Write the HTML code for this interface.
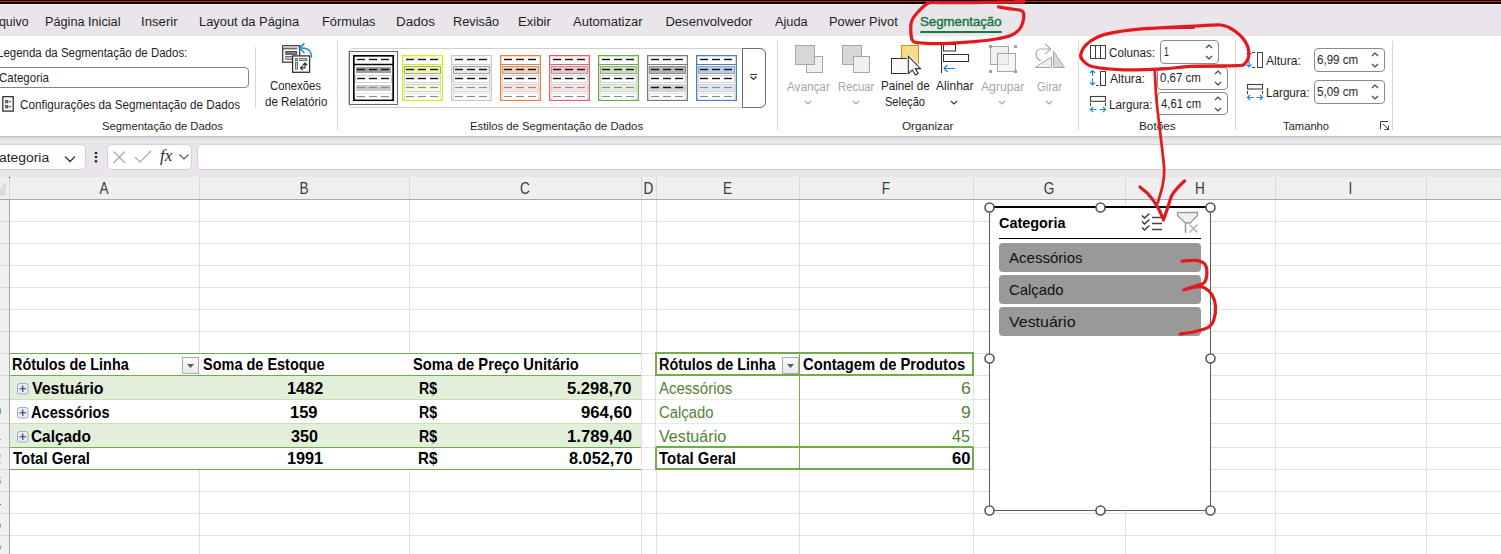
<!DOCTYPE html>
<html><head><meta charset="utf-8"><style>
html,body{margin:0;padding:0;}
body{width:1501px;height:554px;overflow:hidden;position:relative;background:#fff;font-family:"Liberation Sans",sans-serif;}
body>div{position:absolute;}
.t{white-space:pre;transform-origin:0 0;}
</style></head><body>
<div style="left:0px;top:0px;width:1501px;height:4px;background:#000"></div>
<div style="left:0px;top:1px;width:1501px;height:1px;background:#d81c1c"></div>
<div style="left:0px;top:4px;width:1501px;height:32px;background:#eae4eb"></div>
<div style="left:0px;top:4px;width:1501px;height:1px;background:#f5f1f7"></div>
<div class="t" style="left:-0.52px;top:15.00px;font-size:13.08px;line-height:13.08px;color:#1f1f1f;transform:scaleX(0.9442);">quivo</div>
<div class="t" style="left:44.65px;top:15.00px;font-size:13.08px;line-height:13.08px;color:#1f1f1f;transform:scaleX(0.9701);">Página Inicial</div>
<div class="t" style="left:140.78px;top:15.00px;font-size:13.08px;line-height:13.08px;color:#1f1f1f;transform:scaleX(1.0078);">Inserir</div>
<div class="t" style="left:199.34px;top:15.00px;font-size:13.08px;line-height:13.08px;color:#1f1f1f;transform:scaleX(0.9835);">Layout da Página</div>
<div class="t" style="left:322.14px;top:15.00px;font-size:13.08px;line-height:13.08px;color:#1f1f1f;transform:scaleX(0.9815);">Fórmulas</div>
<div class="t" style="left:396.19px;top:15.00px;font-size:13.08px;line-height:13.08px;color:#1f1f1f;transform:scaleX(1.0285);">Dados</div>
<div class="t" style="left:452.95px;top:15.00px;font-size:13.08px;line-height:13.08px;color:#1f1f1f;transform:scaleX(0.9769);">Revisão</div>
<div class="t" style="left:517.92px;top:15.00px;font-size:13.08px;line-height:13.08px;color:#1f1f1f;transform:scaleX(1.0023);">Exibir</div>
<div class="t" style="left:573.17px;top:15.00px;font-size:13.08px;line-height:13.08px;color:#1f1f1f;transform:scaleX(0.9963);">Automatizar</div>
<div class="t" style="left:665.42px;top:15.00px;font-size:13.08px;line-height:13.08px;color:#1f1f1f;">Desenvolvedor</div>
<div class="t" style="left:774.87px;top:15.00px;font-size:13.08px;line-height:13.08px;color:#1f1f1f;transform:scaleX(0.9744);">Ajuda</div>
<div class="t" style="left:829.14px;top:15.00px;font-size:13.08px;line-height:13.08px;color:#1f1f1f;transform:scaleX(0.9853);">Power Pivot</div>
<div class="t" style="left:919.90px;top:16.00px;font-size:12.79px;line-height:12.79px;color:#137a40;transform:scaleX(1.0343);-webkit-text-stroke:0.4px #137a40;">Segmentação</div>
<div style="left:920px;top:31px;width:82px;height:2px;background:#107c41;border-radius:1px"></div>
<div style="left:0px;top:36px;width:1501px;height:100px;background:#fff"></div>
<div style="left:0px;top:136px;width:1501px;height:1px;background:#cbc6cd"></div>
<div class="t" style="left:-3.15px;top:47.00px;font-size:12.65px;line-height:12.65px;color:#1f1f1f;transform:scaleX(0.9087);">Legenda da Segmentação de Dados:</div>
<div style="left:-10px;top:67px;width:259px;height:21px;box-sizing:border-box;border:1px solid #858585;border-radius:4px;background:#fff"></div>
<div class="t" style="left:-0.58px;top:72.00px;font-size:12.94px;line-height:12.94px;color:#1f1f1f;transform:scaleX(0.8907);">Categoria</div>
<svg style="position:absolute;left:0px;top:92px" width="24" height="24" viewBox="0 0 24 24"><rect x="2.8" y="4.7" width="10.4" height="14.4" fill="#fff" stroke="#333" stroke-width="1.3"/><rect x="5.7" y="8.6" width="2" height="2" fill="#fff" stroke="#555" stroke-width="1.3"/><rect x="5.7" y="13.6" width="2" height="2" fill="#fff" stroke="#555" stroke-width="1.3"/><line x1="9.2" y1="9.6" x2="11" y2="9.6" stroke="#555" stroke-width="1.2"/><line x1="9.2" y1="14.6" x2="11" y2="14.6" stroke="#555" stroke-width="1.2"/></svg>
<div class="t" style="left:19.72px;top:99.00px;font-size:12.65px;line-height:12.65px;color:#1f1f1f;transform:scaleX(0.9235);">Configurações da Segmentação de Dados</div>
<div style="left:255px;top:47px;width:1px;height:61px;background:#d6d6d6"></div>
<svg style="position:absolute;left:278px;top:40px" width="38" height="36" viewBox="0 0 38 36"><rect x="4.7" y="5.7" width="17" height="16.5" fill="#fff" stroke="#333" stroke-width="1.2"/><rect x="5.3" y="6.2" width="15.5" height="2" fill="#c4c4c4"/><line x1="4.7" y1="8.8" x2="19.5" y2="8.8" stroke="#333" stroke-width="1"/><rect x="7.8" y="11.6" width="11" height="2.7" fill="#7a7a7a" stroke="#333" stroke-width="0.8"/><rect x="7.8" y="16.6" width="7" height="2.7" fill="#c8c8c8" stroke="#555" stroke-width="0.8"/><rect x="14.6" y="15.9" width="17" height="16.4" fill="#fff" stroke="#333" stroke-width="1.3"/><rect x="17.4" y="18.6" width="2" height="2" fill="#c8c8c8" stroke="#555" stroke-width="0.8"/><rect x="21.6" y="18.6" width="7.2" height="2" fill="#c8c8c8" stroke="#555" stroke-width="0.8"/><rect x="17.4" y="22.2" width="2" height="7" fill="#c8c8c8" stroke="#555" stroke-width="0.8"/><path d="M22.6 27.9 H27 V22.9 M24.8 25.3 L27 22.9 L29.2 25.3 M24.8 25.6 L22.4 27.9 L24.8 30.2" fill="none" stroke="#333" stroke-width="1.1"/><path d="M21.6 8.1 C27 7.6 31 9 32.6 12.5 C33.4 14 33.5 16 33.4 17.6" fill="none" stroke="#1e88d8" stroke-width="1.5"/><path d="M26.4 3.4 L21.6 8.1 L26.4 13" fill="none" stroke="#1e88d8" stroke-width="1.5"/></svg>
<div class="t" style="left:270.23px;top:80.00px;font-size:12.65px;line-height:12.65px;color:#1f1f1f;transform:scaleX(0.8951);">Conexões</div>
<div class="t" style="left:264.51px;top:96.00px;font-size:12.65px;line-height:12.65px;color:#1f1f1f;transform:scaleX(0.9148);">de Relatório</div>
<div class="t" style="left:101.79px;top:121.00px;font-size:11.48px;line-height:11.48px;color:#1f1f1f;transform:scaleX(0.9829);">Segmentação de Dados</div>
<div style="left:337px;top:41px;width:1px;height:89px;background:#d6d6d6"></div>
<div style="left:348px;top:48px;width:418px;height:60px;box-sizing:border-box;border:1px solid #cfcfcf;border-radius:5px;background:#fff"></div>
<div style="left:742px;top:48px;width:24px;height:60px;box-sizing:border-box;border:1px solid #6c6c6c;border-radius:0 6px 6px 0;background:#fff"></div>
<svg style="position:absolute;left:748px;top:72px" width="12" height="10" viewBox="0 0 12 10"><path d="M2 2.5 H9" stroke="#333" stroke-width="1.1"/><path d="M2.5 4.5 L5.5 7.5 L8.5 4.5" fill="none" stroke="#333" stroke-width="1.2"/></svg>
<div style="left:349px;top:51px;width:49px;height:54px;box-sizing:border-box;border:1.5px solid #6a6a6a;background:#f7f7f7"></div>
<svg style="position:absolute;left:353px;top:55px" width="41" height="46" viewBox="0 0 41 46"><rect x="0.7" y="0.7" width="39.6" height="44.6" fill="#fff" stroke="#000" stroke-width="1.4"/><line x1="0" y1="9.5" x2="41" y2="9.5" stroke="#000" stroke-width="1.4"/><rect x="2.5" y="11.5" width="36" height="7" fill="#9c9c9c" stroke="#fff" stroke-width="1"/><rect x="2.5" y="20.5" width="36" height="7" fill="#fff" stroke="#d2d2d2" stroke-width="1"/><rect x="2.5" y="29.5" width="36" height="7" fill="#cacaca" stroke="#fff" stroke-width="1"/><rect x="2.5" y="38.5" width="36" height="8" fill="#fff" stroke="#e2e2e2" stroke-width="1"/><line x1="4" y1="4.5" x2="12" y2="4.5" stroke="#111" stroke-width="1.4"/><line x1="16" y1="4.5" x2="24" y2="4.5" stroke="#111" stroke-width="1.4"/><line x1="28" y1="4.5" x2="36" y2="4.5" stroke="#111" stroke-width="1.4"/><line x1="4" y1="14.5" x2="12" y2="14.5" stroke="#111" stroke-width="1.4"/><line x1="16" y1="14.5" x2="24" y2="14.5" stroke="#111" stroke-width="1.4"/><line x1="28" y1="14.5" x2="36" y2="14.5" stroke="#111" stroke-width="1.4"/><line x1="4" y1="23.5" x2="12" y2="23.5" stroke="#111" stroke-width="1.4"/><line x1="16" y1="23.5" x2="24" y2="23.5" stroke="#111" stroke-width="1.4"/><line x1="28" y1="23.5" x2="36" y2="23.5" stroke="#111" stroke-width="1.4"/><line x1="4" y1="32.5" x2="12" y2="32.5" stroke="#8c8c8c" stroke-width="1.2"/><line x1="16" y1="32.5" x2="24" y2="32.5" stroke="#8c8c8c" stroke-width="1.2"/><line x1="28" y1="32.5" x2="36" y2="32.5" stroke="#8c8c8c" stroke-width="1.2"/><line x1="4" y1="41.5" x2="12" y2="41.5" stroke="#8c8c8c" stroke-width="1.2"/><line x1="16" y1="41.5" x2="24" y2="41.5" stroke="#8c8c8c" stroke-width="1.2"/><line x1="28" y1="41.5" x2="36" y2="41.5" stroke="#8c8c8c" stroke-width="1.2"/><rect x="0.7" y="0.7" width="39.6" height="44.6" fill="none" stroke="#000" stroke-width="1.4"/></svg>
<svg style="position:absolute;left:402px;top:55px" width="41" height="46" viewBox="0 0 41 46"><rect x="0.575" y="0.575" width="39.85" height="44.85" fill="#fff" stroke="#ccf500" stroke-width="1.15"/><line x1="0" y1="9.5" x2="41" y2="9.5" stroke="#ccf500" stroke-width="1.15"/><rect x="2.5" y="11.5" width="36" height="7" fill="#f3f7a6" stroke="#a0a0a0" stroke-width="1"/><rect x="2.5" y="20.5" width="36" height="7" fill="#fff" stroke="#d2d2d2" stroke-width="1"/><rect x="2.5" y="29.5" width="36" height="7" fill="#f9fbd9" stroke="#d2d2d2" stroke-width="1"/><rect x="2.5" y="38.5" width="36" height="8" fill="#fff" stroke="#e2e2e2" stroke-width="1"/><line x1="4" y1="4.5" x2="12" y2="4.5" stroke="#111" stroke-width="1.4"/><line x1="16" y1="4.5" x2="24" y2="4.5" stroke="#111" stroke-width="1.4"/><line x1="28" y1="4.5" x2="36" y2="4.5" stroke="#111" stroke-width="1.4"/><line x1="4" y1="14.5" x2="12" y2="14.5" stroke="#111" stroke-width="1.4"/><line x1="16" y1="14.5" x2="24" y2="14.5" stroke="#111" stroke-width="1.4"/><line x1="28" y1="14.5" x2="36" y2="14.5" stroke="#111" stroke-width="1.4"/><line x1="4" y1="23.5" x2="12" y2="23.5" stroke="#111" stroke-width="1.4"/><line x1="16" y1="23.5" x2="24" y2="23.5" stroke="#111" stroke-width="1.4"/><line x1="28" y1="23.5" x2="36" y2="23.5" stroke="#111" stroke-width="1.4"/><line x1="4" y1="32.5" x2="12" y2="32.5" stroke="#8c8c8c" stroke-width="1.2"/><line x1="16" y1="32.5" x2="24" y2="32.5" stroke="#8c8c8c" stroke-width="1.2"/><line x1="28" y1="32.5" x2="36" y2="32.5" stroke="#8c8c8c" stroke-width="1.2"/><line x1="4" y1="41.5" x2="12" y2="41.5" stroke="#8c8c8c" stroke-width="1.2"/><line x1="16" y1="41.5" x2="24" y2="41.5" stroke="#8c8c8c" stroke-width="1.2"/><line x1="28" y1="41.5" x2="36" y2="41.5" stroke="#8c8c8c" stroke-width="1.2"/><rect x="0.575" y="0.575" width="39.85" height="44.85" fill="none" stroke="#ccf500" stroke-width="1.15"/></svg>
<svg style="position:absolute;left:451px;top:55px" width="41" height="46" viewBox="0 0 41 46"><rect x="0.575" y="0.575" width="39.85" height="44.85" fill="#fff" stroke="#c8c8c8" stroke-width="1.15"/><line x1="0" y1="9.5" x2="41" y2="9.5" stroke="#c8c8c8" stroke-width="1.15"/><rect x="2.5" y="11.5" width="36" height="7" fill="#e9e9e9" stroke="#a0a0a0" stroke-width="1"/><rect x="2.5" y="20.5" width="36" height="7" fill="#fff" stroke="#d2d2d2" stroke-width="1"/><rect x="2.5" y="29.5" width="36" height="7" fill="#f2f2f2" stroke="#d2d2d2" stroke-width="1"/><rect x="2.5" y="38.5" width="36" height="8" fill="#fff" stroke="#e2e2e2" stroke-width="1"/><line x1="4" y1="4.5" x2="12" y2="4.5" stroke="#111" stroke-width="1.4"/><line x1="16" y1="4.5" x2="24" y2="4.5" stroke="#111" stroke-width="1.4"/><line x1="28" y1="4.5" x2="36" y2="4.5" stroke="#111" stroke-width="1.4"/><line x1="4" y1="14.5" x2="12" y2="14.5" stroke="#111" stroke-width="1.4"/><line x1="16" y1="14.5" x2="24" y2="14.5" stroke="#111" stroke-width="1.4"/><line x1="28" y1="14.5" x2="36" y2="14.5" stroke="#111" stroke-width="1.4"/><line x1="4" y1="23.5" x2="12" y2="23.5" stroke="#111" stroke-width="1.4"/><line x1="16" y1="23.5" x2="24" y2="23.5" stroke="#111" stroke-width="1.4"/><line x1="28" y1="23.5" x2="36" y2="23.5" stroke="#111" stroke-width="1.4"/><line x1="4" y1="32.5" x2="12" y2="32.5" stroke="#8c8c8c" stroke-width="1.2"/><line x1="16" y1="32.5" x2="24" y2="32.5" stroke="#8c8c8c" stroke-width="1.2"/><line x1="28" y1="32.5" x2="36" y2="32.5" stroke="#8c8c8c" stroke-width="1.2"/><line x1="4" y1="41.5" x2="12" y2="41.5" stroke="#8c8c8c" stroke-width="1.2"/><line x1="16" y1="41.5" x2="24" y2="41.5" stroke="#8c8c8c" stroke-width="1.2"/><line x1="28" y1="41.5" x2="36" y2="41.5" stroke="#8c8c8c" stroke-width="1.2"/><rect x="0.575" y="0.575" width="39.85" height="44.85" fill="none" stroke="#c8c8c8" stroke-width="1.15"/></svg>
<svg style="position:absolute;left:500px;top:55px" width="41" height="46" viewBox="0 0 41 46"><rect x="0.575" y="0.575" width="39.85" height="44.85" fill="#fff" stroke="#f47d3a" stroke-width="1.15"/><line x1="0" y1="9.5" x2="41" y2="9.5" stroke="#f47d3a" stroke-width="1.15"/><rect x="2.5" y="11.5" width="36" height="7" fill="#fbcdb2" stroke="#a0a0a0" stroke-width="1"/><rect x="2.5" y="20.5" width="36" height="7" fill="#fff" stroke="#d2d2d2" stroke-width="1"/><rect x="2.5" y="29.5" width="36" height="7" fill="#fde6d9" stroke="#d2d2d2" stroke-width="1"/><rect x="2.5" y="38.5" width="36" height="8" fill="#fff" stroke="#e2e2e2" stroke-width="1"/><line x1="4" y1="4.5" x2="12" y2="4.5" stroke="#111" stroke-width="1.4"/><line x1="16" y1="4.5" x2="24" y2="4.5" stroke="#111" stroke-width="1.4"/><line x1="28" y1="4.5" x2="36" y2="4.5" stroke="#111" stroke-width="1.4"/><line x1="4" y1="14.5" x2="12" y2="14.5" stroke="#111" stroke-width="1.4"/><line x1="16" y1="14.5" x2="24" y2="14.5" stroke="#111" stroke-width="1.4"/><line x1="28" y1="14.5" x2="36" y2="14.5" stroke="#111" stroke-width="1.4"/><line x1="4" y1="23.5" x2="12" y2="23.5" stroke="#111" stroke-width="1.4"/><line x1="16" y1="23.5" x2="24" y2="23.5" stroke="#111" stroke-width="1.4"/><line x1="28" y1="23.5" x2="36" y2="23.5" stroke="#111" stroke-width="1.4"/><line x1="4" y1="32.5" x2="12" y2="32.5" stroke="#8c8c8c" stroke-width="1.2"/><line x1="16" y1="32.5" x2="24" y2="32.5" stroke="#8c8c8c" stroke-width="1.2"/><line x1="28" y1="32.5" x2="36" y2="32.5" stroke="#8c8c8c" stroke-width="1.2"/><line x1="4" y1="41.5" x2="12" y2="41.5" stroke="#8c8c8c" stroke-width="1.2"/><line x1="16" y1="41.5" x2="24" y2="41.5" stroke="#8c8c8c" stroke-width="1.2"/><line x1="28" y1="41.5" x2="36" y2="41.5" stroke="#8c8c8c" stroke-width="1.2"/><rect x="0.575" y="0.575" width="39.85" height="44.85" fill="none" stroke="#f47d3a" stroke-width="1.15"/></svg>
<svg style="position:absolute;left:549px;top:55px" width="41" height="46" viewBox="0 0 41 46"><rect x="0.575" y="0.575" width="39.85" height="44.85" fill="#fff" stroke="#e95d6a" stroke-width="1.15"/><line x1="0" y1="9.5" x2="41" y2="9.5" stroke="#e95d6a" stroke-width="1.15"/><rect x="2.5" y="11.5" width="36" height="7" fill="#f8c3c9" stroke="#a0a0a0" stroke-width="1"/><rect x="2.5" y="20.5" width="36" height="7" fill="#fff" stroke="#d2d2d2" stroke-width="1"/><rect x="2.5" y="29.5" width="36" height="7" fill="#fce2e5" stroke="#d2d2d2" stroke-width="1"/><rect x="2.5" y="38.5" width="36" height="8" fill="#fff" stroke="#e2e2e2" stroke-width="1"/><line x1="4" y1="4.5" x2="12" y2="4.5" stroke="#111" stroke-width="1.4"/><line x1="16" y1="4.5" x2="24" y2="4.5" stroke="#111" stroke-width="1.4"/><line x1="28" y1="4.5" x2="36" y2="4.5" stroke="#111" stroke-width="1.4"/><line x1="4" y1="14.5" x2="12" y2="14.5" stroke="#111" stroke-width="1.4"/><line x1="16" y1="14.5" x2="24" y2="14.5" stroke="#111" stroke-width="1.4"/><line x1="28" y1="14.5" x2="36" y2="14.5" stroke="#111" stroke-width="1.4"/><line x1="4" y1="23.5" x2="12" y2="23.5" stroke="#111" stroke-width="1.4"/><line x1="16" y1="23.5" x2="24" y2="23.5" stroke="#111" stroke-width="1.4"/><line x1="28" y1="23.5" x2="36" y2="23.5" stroke="#111" stroke-width="1.4"/><line x1="4" y1="32.5" x2="12" y2="32.5" stroke="#8c8c8c" stroke-width="1.2"/><line x1="16" y1="32.5" x2="24" y2="32.5" stroke="#8c8c8c" stroke-width="1.2"/><line x1="28" y1="32.5" x2="36" y2="32.5" stroke="#8c8c8c" stroke-width="1.2"/><line x1="4" y1="41.5" x2="12" y2="41.5" stroke="#8c8c8c" stroke-width="1.2"/><line x1="16" y1="41.5" x2="24" y2="41.5" stroke="#8c8c8c" stroke-width="1.2"/><line x1="28" y1="41.5" x2="36" y2="41.5" stroke="#8c8c8c" stroke-width="1.2"/><rect x="0.575" y="0.575" width="39.85" height="44.85" fill="none" stroke="#e95d6a" stroke-width="1.15"/></svg>
<svg style="position:absolute;left:598px;top:55px" width="41" height="46" viewBox="0 0 41 46"><rect x="0.575" y="0.575" width="39.85" height="44.85" fill="#fff" stroke="#6eaa42" stroke-width="1.15"/><line x1="0" y1="9.5" x2="41" y2="9.5" stroke="#6eaa42" stroke-width="1.15"/><rect x="2.5" y="11.5" width="36" height="7" fill="#c8e2b7" stroke="#a0a0a0" stroke-width="1"/><rect x="2.5" y="20.5" width="36" height="7" fill="#fff" stroke="#d2d2d2" stroke-width="1"/><rect x="2.5" y="29.5" width="36" height="7" fill="#e2f0da" stroke="#d2d2d2" stroke-width="1"/><rect x="2.5" y="38.5" width="36" height="8" fill="#fff" stroke="#e2e2e2" stroke-width="1"/><line x1="4" y1="4.5" x2="12" y2="4.5" stroke="#111" stroke-width="1.4"/><line x1="16" y1="4.5" x2="24" y2="4.5" stroke="#111" stroke-width="1.4"/><line x1="28" y1="4.5" x2="36" y2="4.5" stroke="#111" stroke-width="1.4"/><line x1="4" y1="14.5" x2="12" y2="14.5" stroke="#111" stroke-width="1.4"/><line x1="16" y1="14.5" x2="24" y2="14.5" stroke="#111" stroke-width="1.4"/><line x1="28" y1="14.5" x2="36" y2="14.5" stroke="#111" stroke-width="1.4"/><line x1="4" y1="23.5" x2="12" y2="23.5" stroke="#111" stroke-width="1.4"/><line x1="16" y1="23.5" x2="24" y2="23.5" stroke="#111" stroke-width="1.4"/><line x1="28" y1="23.5" x2="36" y2="23.5" stroke="#111" stroke-width="1.4"/><line x1="4" y1="32.5" x2="12" y2="32.5" stroke="#8c8c8c" stroke-width="1.2"/><line x1="16" y1="32.5" x2="24" y2="32.5" stroke="#8c8c8c" stroke-width="1.2"/><line x1="28" y1="32.5" x2="36" y2="32.5" stroke="#8c8c8c" stroke-width="1.2"/><line x1="4" y1="41.5" x2="12" y2="41.5" stroke="#8c8c8c" stroke-width="1.2"/><line x1="16" y1="41.5" x2="24" y2="41.5" stroke="#8c8c8c" stroke-width="1.2"/><line x1="28" y1="41.5" x2="36" y2="41.5" stroke="#8c8c8c" stroke-width="1.2"/><rect x="0.575" y="0.575" width="39.85" height="44.85" fill="none" stroke="#6eaa42" stroke-width="1.15"/></svg>
<svg style="position:absolute;left:647px;top:55px" width="41" height="46" viewBox="0 0 41 46"><rect x="0.575" y="0.575" width="39.85" height="44.85" fill="#fff" stroke="#7a7a7a" stroke-width="1.15"/><line x1="0" y1="9.5" x2="41" y2="9.5" stroke="#7a7a7a" stroke-width="1.15"/><rect x="2.5" y="11.5" width="36" height="7" fill="#b4b4b4" stroke="#8a8a8a" stroke-width="1"/><rect x="2.5" y="20.5" width="36" height="7" fill="#fff" stroke="#d2d2d2" stroke-width="1"/><rect x="2.5" y="29.5" width="36" height="7" fill="#d4d4d4" stroke="#d2d2d2" stroke-width="1"/><rect x="2.5" y="38.5" width="36" height="8" fill="#fff" stroke="#e2e2e2" stroke-width="1"/><line x1="4" y1="4.5" x2="12" y2="4.5" stroke="#111" stroke-width="1.4"/><line x1="16" y1="4.5" x2="24" y2="4.5" stroke="#111" stroke-width="1.4"/><line x1="28" y1="4.5" x2="36" y2="4.5" stroke="#111" stroke-width="1.4"/><line x1="4" y1="14.5" x2="12" y2="14.5" stroke="#111" stroke-width="1.4"/><line x1="16" y1="14.5" x2="24" y2="14.5" stroke="#111" stroke-width="1.4"/><line x1="28" y1="14.5" x2="36" y2="14.5" stroke="#111" stroke-width="1.4"/><line x1="4" y1="23.5" x2="12" y2="23.5" stroke="#111" stroke-width="1.4"/><line x1="16" y1="23.5" x2="24" y2="23.5" stroke="#111" stroke-width="1.4"/><line x1="28" y1="23.5" x2="36" y2="23.5" stroke="#111" stroke-width="1.4"/><line x1="4" y1="32.5" x2="12" y2="32.5" stroke="#111" stroke-width="1.4"/><line x1="16" y1="32.5" x2="24" y2="32.5" stroke="#111" stroke-width="1.4"/><line x1="28" y1="32.5" x2="36" y2="32.5" stroke="#111" stroke-width="1.4"/><line x1="4" y1="41.5" x2="12" y2="41.5" stroke="#8c8c8c" stroke-width="1.2"/><line x1="16" y1="41.5" x2="24" y2="41.5" stroke="#8c8c8c" stroke-width="1.2"/><line x1="28" y1="41.5" x2="36" y2="41.5" stroke="#8c8c8c" stroke-width="1.2"/><rect x="0.575" y="0.575" width="39.85" height="44.85" fill="none" stroke="#7a7a7a" stroke-width="1.15"/></svg>
<svg style="position:absolute;left:696px;top:55px" width="41" height="46" viewBox="0 0 41 46"><rect x="0.575" y="0.575" width="39.85" height="44.85" fill="#fff" stroke="#4a7cc6" stroke-width="1.15"/><line x1="0" y1="9.5" x2="41" y2="9.5" stroke="#4a7cc6" stroke-width="1.15"/><rect x="2.5" y="11.5" width="36" height="7" fill="#b8cdee" stroke="#a0a0a0" stroke-width="1"/><rect x="2.5" y="20.5" width="36" height="7" fill="#fff" stroke="#d2d2d2" stroke-width="1"/><rect x="2.5" y="29.5" width="36" height="7" fill="#dde7f6" stroke="#d2d2d2" stroke-width="1"/><rect x="2.5" y="38.5" width="36" height="8" fill="#fff" stroke="#e2e2e2" stroke-width="1"/><line x1="4" y1="4.5" x2="12" y2="4.5" stroke="#111" stroke-width="1.4"/><line x1="16" y1="4.5" x2="24" y2="4.5" stroke="#111" stroke-width="1.4"/><line x1="28" y1="4.5" x2="36" y2="4.5" stroke="#111" stroke-width="1.4"/><line x1="4" y1="14.5" x2="12" y2="14.5" stroke="#111" stroke-width="1.4"/><line x1="16" y1="14.5" x2="24" y2="14.5" stroke="#111" stroke-width="1.4"/><line x1="28" y1="14.5" x2="36" y2="14.5" stroke="#111" stroke-width="1.4"/><line x1="4" y1="23.5" x2="12" y2="23.5" stroke="#111" stroke-width="1.4"/><line x1="16" y1="23.5" x2="24" y2="23.5" stroke="#111" stroke-width="1.4"/><line x1="28" y1="23.5" x2="36" y2="23.5" stroke="#111" stroke-width="1.4"/><line x1="4" y1="32.5" x2="12" y2="32.5" stroke="#8c8c8c" stroke-width="1.2"/><line x1="16" y1="32.5" x2="24" y2="32.5" stroke="#8c8c8c" stroke-width="1.2"/><line x1="28" y1="32.5" x2="36" y2="32.5" stroke="#8c8c8c" stroke-width="1.2"/><line x1="4" y1="41.5" x2="12" y2="41.5" stroke="#8c8c8c" stroke-width="1.2"/><line x1="16" y1="41.5" x2="24" y2="41.5" stroke="#8c8c8c" stroke-width="1.2"/><line x1="28" y1="41.5" x2="36" y2="41.5" stroke="#8c8c8c" stroke-width="1.2"/><rect x="0.575" y="0.575" width="39.85" height="44.85" fill="none" stroke="#4a7cc6" stroke-width="1.15"/></svg>
<div class="t" style="left:470.47px;top:121.00px;font-size:11.48px;line-height:11.48px;color:#1f1f1f;transform:scaleX(0.9833);">Estilos de Segmentação de Dados</div>
<div style="left:777px;top:41px;width:1px;height:89px;background:#d6d6d6"></div>
<svg style="position:absolute;left:790px;top:40px" width="90" height="40" viewBox="0 0 90 40"><rect x="16.5" y="16.5" width="16" height="16" fill="#f0f0f0" stroke="#a6a6a6"/><rect x="5.5" y="5.5" width="19" height="19" fill="#d7d7d7" stroke="#a6a6a6"/><rect x="52.5" y="5.5" width="19" height="19" fill="#d7d7d7" stroke="#a6a6a6"/><rect x="63.5" y="16.5" width="16" height="16" fill="#f0f0f0" stroke="#a6a6a6"/></svg>
<div class="t" style="left:787.27px;top:81.00px;font-size:12.65px;line-height:12.65px;color:#a6a6a6;transform:scaleX(0.9274);">Avançar</div>
<div class="t" style="left:837.67px;top:81.00px;font-size:12.65px;line-height:12.65px;color:#a6a6a6;transform:scaleX(0.8908);">Recuar</div>
<svg style="position:absolute;left:804.4px;top:99.7px" width="8" height="5" viewBox="0 0 8 5"><path d="M1 1 L4.0 4 L7 1" fill="none" stroke="#a6a6a6" stroke-width="1.1"/></svg>
<svg style="position:absolute;left:851.5px;top:99.7px" width="8" height="5" viewBox="0 0 8 5"><path d="M1 1 L4.0 4 L7 1" fill="none" stroke="#a6a6a6" stroke-width="1.1"/></svg>
<svg style="position:absolute;left:888px;top:42px" width="36" height="36" viewBox="0 0 36 36"><rect x="13.5" y="3.5" width="17" height="23" fill="#f8d98b" stroke="#d9891e"/><rect x="3.5" y="16.5" width="16" height="15" fill="#fafafa" stroke="#303030"/><path d="M20.3 14 L20.3 31.6 L24.3 27.8 L27.4 33 L30.2 31.6 L27.3 26.6 L32.5 26.6 Z" fill="#fff" stroke="#fff" stroke-width="3" stroke-linejoin="round"/><path d="M20.3 14 L20.3 31.6 L24.3 27.8 L27.4 33 L30.2 31.6 L27.3 26.6 L32.5 26.6 Z" fill="#fafafa" stroke="#303030" stroke-width="1.1" stroke-linejoin="miter"/></svg>
<div class="t" style="left:881.04px;top:80.00px;font-size:12.79px;line-height:12.79px;color:#1f1f1f;transform:scaleX(0.9123);">Painel de</div>
<div class="t" style="left:885.00px;top:96.00px;font-size:12.79px;line-height:12.79px;color:#1f1f1f;transform:scaleX(0.8644);">Seleção</div>
<svg style="position:absolute;left:936px;top:40px" width="40" height="36" viewBox="0 0 40 36"><line x1="5.5" y1="5" x2="5.5" y2="33" stroke="#303030"/><rect x="7.5" y="4.5" width="12" height="6.5" fill="#fafafa" stroke="#303030"/><rect x="7.5" y="14.5" width="25" height="7" fill="#fafafa" stroke="#303030"/><path d="M8 28.5 H19 M11.5 25 L8 28.5 L11.5 32" fill="none" stroke="#1e88d8" stroke-width="1.2"/></svg>
<div class="t" style="left:936.17px;top:80.00px;font-size:12.79px;line-height:12.79px;color:#1f1f1f;transform:scaleX(0.9447);">Alinhar</div>
<svg style="position:absolute;left:950.4px;top:99.5px" width="8" height="5" viewBox="0 0 8 5"><path d="M1 1 L4.0 4 L7 1" fill="none" stroke="#303030" stroke-width="1.1"/></svg>
<svg style="position:absolute;left:986px;top:42px" width="34" height="34" viewBox="0 0 34 34"><rect x="4.5" y="4.5" width="18" height="18" fill="#f0f0f0" stroke="#a6a6a6"/><rect x="11.5" y="11.5" width="18" height="18" fill="#f0f0f0" fill-opacity="0.6" stroke="#a6a6a6"/><rect x="3" y="3" width="3" height="3" fill="#a0a0a0"/><rect x="28" y="3" width="3" height="3" fill="#a0a0a0"/><rect x="3" y="28" width="3" height="3" fill="#a0a0a0"/><rect x="28" y="28" width="3" height="3" fill="#a0a0a0"/></svg>
<div class="t" style="left:981.17px;top:81.00px;font-size:12.65px;line-height:12.65px;color:#a6a6a6;transform:scaleX(0.9606);">Agrupar</div>
<svg style="position:absolute;left:998.3px;top:99.7px" width="8" height="5" viewBox="0 0 8 5"><path d="M1 1 L4.0 4 L7 1" fill="none" stroke="#a6a6a6" stroke-width="1.1"/></svg>
<svg style="position:absolute;left:1032px;top:42px" width="36" height="30" viewBox="0 0 36 30"><path d="M3 25.5 L19.5 15 L19.5 25.5 Z" fill="#efefef" stroke="#a6a6a6" stroke-linejoin="round"/><path d="M21.5 9 L21.5 25.5 L32.5 25.5 Z" fill="#d7d7d7" stroke="#a6a6a6" stroke-linejoin="round"/><path d="M18.8 7 H8.3 C5.5 7 4.2 9.5 4.2 12.5 C4.2 15.5 6 17.8 8.8 18.6" fill="none" stroke="#a6a6a6" stroke-width="1.1"/><path d="M13.2 1.8 L18.8 7 L13.2 12.2" fill="none" stroke="#a6a6a6" stroke-width="1.1"/></svg>
<div class="t" style="left:1037.14px;top:81.00px;font-size:12.65px;line-height:12.65px;color:#a6a6a6;transform:scaleX(0.8870);">Girar</div>
<svg style="position:absolute;left:1045.4px;top:99.7px" width="8" height="5" viewBox="0 0 8 5"><path d="M1 1 L4.0 4 L7 1" fill="none" stroke="#a6a6a6" stroke-width="1.1"/></svg>
<div class="t" style="left:901.84px;top:121.00px;font-size:11.48px;line-height:11.48px;color:#1f1f1f;transform:scaleX(1.0183);">Organizar</div>
<div style="left:1078px;top:41px;width:1px;height:89px;background:#d6d6d6"></div>
<svg style="position:absolute;left:1088px;top:44px" width="20" height="72" viewBox="0 0 20 72"><rect x="2.5" y="1.5" width="15" height="13" fill="#fff" stroke="#404040"/><line x1="7.5" y1="2" x2="7.5" y2="14" stroke="#404040"/><line x1="12.5" y1="2" x2="12.5" y2="14" stroke="#404040"/><rect x="12.5" y="27.5" width="5" height="14" fill="#fff" stroke="#404040"/><path d="M4.5 26.5 V32 M2 29 L4.5 26.5 L7 29 M4.5 34.5 V41 M2 38.5 L4.5 41 L7 38.5" fill="none" stroke="#1e88d8" stroke-width="1.2"/><line x1="8" y1="41.5" x2="10.5" y2="41.5" stroke="#404040"/><rect x="2.5" y="52.5" width="15" height="4.8" fill="#fafafa" stroke="#404040" stroke-width="1.1"/><path d="M2.5 59 V62 M17.5 59 V62" stroke="#404040"/><path d="M2.5 65.5 H8.5 M5 63 L2.5 65.5 L5 68 M11.5 65.5 H17.5 M15 63 L17.5 65.5 L15 68" fill="none" stroke="#1e88d8" stroke-width="1.2"/></svg>
<div class="t" style="left:1109.02px;top:47.00px;font-size:12.65px;line-height:12.65px;color:#1f1f1f;transform:scaleX(0.9242);">Colunas:</div>
<div class="t" style="left:1109.57px;top:73.00px;font-size:12.65px;line-height:12.65px;color:#1f1f1f;transform:scaleX(0.9583);">Altura:</div>
<div class="t" style="left:1108.63px;top:99.00px;font-size:12.65px;line-height:12.65px;color:#1f1f1f;transform:scaleX(0.9260);">Largura:</div>
<div style="left:1160px;top:40px;width:59px;height:24px;box-sizing:border-box;border:1px solid #8a8a8a;border-radius:4px;background:#fff"></div>
<div class="t" style="left:1163.74px;top:46.00px;font-size:12.79px;line-height:12.79px;color:#1f1f1f;transform:scaleX(0.6869);">1</div>
<svg style="position:absolute;left:1205px;top:44px" width="8" height="5" viewBox="0 0 8 5"><path d="M1 4 L4 1 L7 4" fill="none" stroke="#404040" stroke-width="1.1"/></svg>
<svg style="position:absolute;left:1205px;top:54.5px" width="8" height="5" viewBox="0 0 8 5"><path d="M1 1 L4 4 L7 1" fill="none" stroke="#404040" stroke-width="1.1"/></svg>
<div style="left:1157px;top:67px;width:71px;height:23px;box-sizing:border-box;border:1px solid #8a8a8a;border-radius:4px;background:#fff"></div>
<div class="t" style="left:1159.84px;top:72.00px;font-size:12.79px;line-height:12.79px;color:#1f1f1f;transform:scaleX(0.8990);">0,67 cm</div>
<svg style="position:absolute;left:1214px;top:69.8px" width="8" height="5" viewBox="0 0 8 5"><path d="M1 4 L4 1 L7 4" fill="none" stroke="#404040" stroke-width="1.1"/></svg>
<svg style="position:absolute;left:1214px;top:81px" width="8" height="5" viewBox="0 0 8 5"><path d="M1 1 L4 4 L7 1" fill="none" stroke="#404040" stroke-width="1.1"/></svg>
<div style="left:1157px;top:92px;width:71px;height:23px;box-sizing:border-box;border:1px solid #8a8a8a;border-radius:4px;background:#fff"></div>
<div class="t" style="left:1160.65px;top:98.00px;font-size:12.79px;line-height:12.79px;color:#1f1f1f;transform:scaleX(0.8810);">4,61 cm</div>
<svg style="position:absolute;left:1214px;top:95.6px" width="8" height="5" viewBox="0 0 8 5"><path d="M1 4 L4 1 L7 4" fill="none" stroke="#404040" stroke-width="1.1"/></svg>
<svg style="position:absolute;left:1214px;top:106.5px" width="8" height="5" viewBox="0 0 8 5"><path d="M1 1 L4 4 L7 1" fill="none" stroke="#404040" stroke-width="1.1"/></svg>
<div class="t" style="left:1138.53px;top:121.00px;font-size:11.48px;line-height:11.48px;color:#1f1f1f;transform:scaleX(1.0265);">Botões</div>
<div style="left:1235px;top:41px;width:1px;height:89px;background:#d6d6d6"></div>
<svg style="position:absolute;left:1244px;top:48px" width="22" height="54" viewBox="0 0 22 54"><rect x="13.5" y="4.5" width="5" height="15" fill="#fff" stroke="#404040"/><path d="M5 4 V10 M2.5 6.5 L5 4 L7.5 6.5 M5 12.5 V19 M2.5 16.5 L5 19 L7.5 16.5" fill="none" stroke="#1e88d8" stroke-width="1.2"/><line x1="8" y1="4.5" x2="11" y2="4.5" stroke="#404040"/><line x1="8" y1="19.5" x2="11" y2="19.5" stroke="#404040"/><rect x="3.5" y="36.5" width="15" height="4.5" fill="#fafafa" stroke="#404040" stroke-width="1.1"/><path d="M3.5 43 V46 M18.5 43 V46" stroke="#404040"/><path d="M3.5 49.5 H9.5 M6 47 L3.5 49.5 L6 52 M12.5 49.5 H18.5 M16 47 L18.5 49.5 L16 52" fill="none" stroke="#1e88d8" stroke-width="1.2"/></svg>
<div class="t" style="left:1266.47px;top:55.00px;font-size:12.65px;line-height:12.65px;color:#1f1f1f;transform:scaleX(0.9555);">Altura:</div>
<div class="t" style="left:1265.54px;top:87.00px;font-size:12.65px;line-height:12.65px;color:#1f1f1f;transform:scaleX(0.9238);">Largura:</div>
<div style="left:1314px;top:48px;width:71px;height:24px;box-sizing:border-box;border:1px solid #8a8a8a;border-radius:4px;background:#fff"></div>
<div class="t" style="left:1316.92px;top:54.00px;font-size:12.79px;line-height:12.79px;color:#1f1f1f;transform:scaleX(0.9062);">6,99 cm</div>
<svg style="position:absolute;left:1371px;top:51.9px" width="8" height="5" viewBox="0 0 8 5"><path d="M1 4 L4 1 L7 4" fill="none" stroke="#404040" stroke-width="1.1"/></svg>
<svg style="position:absolute;left:1371px;top:63px" width="8" height="5" viewBox="0 0 8 5"><path d="M1 1 L4 4 L7 1" fill="none" stroke="#404040" stroke-width="1.1"/></svg>
<div style="left:1314px;top:80px;width:71px;height:24px;box-sizing:border-box;border:1px solid #8a8a8a;border-radius:4px;background:#fff"></div>
<div class="t" style="left:1317.04px;top:86.00px;font-size:12.79px;line-height:12.79px;color:#1f1f1f;transform:scaleX(0.9035);">5,09 cm</div>
<svg style="position:absolute;left:1371px;top:83.5px" width="8" height="5" viewBox="0 0 8 5"><path d="M1 4 L4 1 L7 4" fill="none" stroke="#404040" stroke-width="1.1"/></svg>
<svg style="position:absolute;left:1371px;top:95px" width="8" height="5" viewBox="0 0 8 5"><path d="M1 1 L4 4 L7 1" fill="none" stroke="#404040" stroke-width="1.1"/></svg>
<div class="t" style="left:1282.95px;top:121.00px;font-size:11.48px;line-height:11.48px;color:#1f1f1f;transform:scaleX(0.9763);">Tamanho</div>
<svg style="position:absolute;left:1380px;top:121px" width="10" height="10" viewBox="0 0 10 10"><path d="M0.5 8 V0.5 H8" fill="none" stroke="#404040"/><path d="M3 3 L8.5 8.5 M8.5 4.5 V8.5 H4.5" fill="none" stroke="#404040"/></svg>
<div style="left:1392px;top:41px;width:1px;height:89px;background:#d6d6d6"></div>
<div style="left:0px;top:137px;width:1501px;height:40px;background:#eae4eb"></div>
<div style="left:0px;top:137px;width:1501px;height:1px;background:#d8d2da"></div>
<div style="left:0px;top:138px;width:1501px;height:1px;background:#e2dce4"></div>
<div style="left:-10px;top:144px;width:96px;height:26px;box-sizing:border-box;border:1px solid #d3cfd6;border-radius:5px;background:#fff"></div>
<div class="t" style="left:-1.09px;top:151.00px;font-size:13.66px;line-height:13.66px;color:#1f1f1f;transform:scaleX(1.0162);">ategoria</div>
<svg style="position:absolute;left:64px;top:155px" width="12" height="8" viewBox="0 0 12 8"><path d="M1 1.5 L6 6.5 L11 1.5" fill="none" stroke="#333" stroke-width="1.3"/></svg>
<svg style="position:absolute;left:93px;top:150px" width="6" height="14" viewBox="0 0 6 14"><circle cx="3" cy="3" r="1.3" fill="#222"/><circle cx="3" cy="7" r="1.3" fill="#222"/><circle cx="3" cy="11.3" r="1.3" fill="#222"/></svg>
<div style="left:107px;top:144px;width:85px;height:26px;box-sizing:border-box;border:1px solid #d3cfd6;border-radius:5px;background:#fff"></div>
<svg style="position:absolute;left:112px;top:150px" width="15" height="15" viewBox="0 0 15 15"><path d="M1.5 1.5 L13 13 M13 1.5 L1.5 13" stroke="#a8a8a8" stroke-width="1.1"/></svg>
<svg style="position:absolute;left:134px;top:150px" width="19" height="14" viewBox="0 0 19 14"><path d="M1 7 L6 12 L17 1" fill="none" stroke="#a8a8a8" stroke-width="1.1"/></svg>
<div class="t" style="left:160px;top:147px;font-family:'Liberation Serif',serif;font-style:italic;font-size:17px;line-height:17px;color:#2a2a2a;transform:scaleX(1.0)">fx</div>
<svg style="position:absolute;left:178px;top:153px" width="12" height="8" viewBox="0 0 12 8"><path d="M1.5 1.5 L6 6 L10.5 1.5" fill="none" stroke="#555" stroke-width="1.1"/></svg>
<div style="left:197px;top:144px;width:1320px;height:26px;box-sizing:border-box;border:1px solid #d3cfd6;border-radius:5px;background:#fff"></div>
<div style="left:0px;top:177px;width:1501px;height:22px;background:#efefef"></div>
<div style="left:0px;top:199px;width:1501px;height:1px;background:#a8a8a8"></div>
<div class="t" style="left:9px;top:180px;width:190px;text-align:center;font-size:15.8px;line-height:18px;color:#3a3a3a;transform:scaleX(0.86);transform-origin:50% 0">A</div>
<div class="t" style="left:199px;top:180px;width:210px;text-align:center;font-size:15.8px;line-height:18px;color:#3a3a3a;transform:scaleX(0.86);transform-origin:50% 0">B</div>
<div class="t" style="left:409px;top:180px;width:232px;text-align:center;font-size:15.8px;line-height:18px;color:#3a3a3a;transform:scaleX(0.86);transform-origin:50% 0">C</div>
<div class="t" style="left:641px;top:180px;width:15px;text-align:center;font-size:15.8px;line-height:18px;color:#3a3a3a;transform:scaleX(0.86);transform-origin:50% 0">D</div>
<div class="t" style="left:656px;top:180px;width:143px;text-align:center;font-size:15.8px;line-height:18px;color:#3a3a3a;transform:scaleX(0.86);transform-origin:50% 0">E</div>
<div class="t" style="left:799px;top:180px;width:174px;text-align:center;font-size:15.8px;line-height:18px;color:#3a3a3a;transform:scaleX(0.86);transform-origin:50% 0">F</div>
<div class="t" style="left:973px;top:180px;width:152px;text-align:center;font-size:15.8px;line-height:18px;color:#3a3a3a;transform:scaleX(0.86);transform-origin:50% 0">G</div>
<div class="t" style="left:1125px;top:180px;width:150px;text-align:center;font-size:15.8px;line-height:18px;color:#3a3a3a;transform:scaleX(0.86);transform-origin:50% 0">H</div>
<div class="t" style="left:1275px;top:180px;width:151px;text-align:center;font-size:15.8px;line-height:18px;color:#3a3a3a;transform:scaleX(0.86);transform-origin:50% 0">I</div>
<div class="t" style="left:1430px;top:180px;width:151px;text-align:center;font-size:15.8px;line-height:18px;color:#3a3a3a;transform:scaleX(0.86);transform-origin:50% 0">J</div>
<div style="left:199px;top:177px;width:1px;height:22px;background:#d9d9d9"></div>
<div style="left:409px;top:177px;width:1px;height:22px;background:#d9d9d9"></div>
<div style="left:641px;top:177px;width:1px;height:22px;background:#d9d9d9"></div>
<div style="left:656px;top:177px;width:1px;height:22px;background:#d9d9d9"></div>
<div style="left:799px;top:177px;width:1px;height:22px;background:#d9d9d9"></div>
<div style="left:973px;top:177px;width:1px;height:22px;background:#d9d9d9"></div>
<div style="left:1125px;top:177px;width:1px;height:22px;background:#d9d9d9"></div>
<div style="left:1275px;top:177px;width:1px;height:22px;background:#d9d9d9"></div>
<div style="left:1426px;top:177px;width:1px;height:22px;background:#d9d9d9"></div>
<div style="left:9px;top:177px;width:1px;height:22px;background:#d9d9d9"></div>
<svg style="position:absolute;left:0px;top:177px" width="9" height="22" viewBox="0 0 9 22"><path d="M6 4.7 L6 18.8 L-8 18.8 Z" fill="#dcdcdc"/></svg>
<div style="left:9px;top:177px;width:1px;height:1px;background:#111"></div>
<div style="left:10px;top:200px;width:1491px;height:354px;background:#fff"></div>
<div style="left:10px;top:221px;width:1491px;height:1px;background:#e1e1e1"></div>
<div style="left:10px;top:243px;width:1491px;height:1px;background:#e1e1e1"></div>
<div style="left:10px;top:265px;width:1491px;height:1px;background:#e1e1e1"></div>
<div style="left:10px;top:287px;width:1491px;height:1px;background:#e1e1e1"></div>
<div style="left:10px;top:309px;width:1491px;height:1px;background:#e1e1e1"></div>
<div style="left:10px;top:331px;width:1491px;height:1px;background:#e1e1e1"></div>
<div style="left:10px;top:353px;width:1491px;height:1px;background:#e1e1e1"></div>
<div style="left:10px;top:375px;width:1491px;height:1px;background:#e1e1e1"></div>
<div style="left:10px;top:399px;width:1491px;height:1px;background:#e1e1e1"></div>
<div style="left:10px;top:423px;width:1491px;height:1px;background:#e1e1e1"></div>
<div style="left:10px;top:447px;width:1491px;height:1px;background:#e1e1e1"></div>
<div style="left:10px;top:469px;width:1491px;height:1px;background:#e1e1e1"></div>
<div style="left:10px;top:491px;width:1491px;height:1px;background:#e1e1e1"></div>
<div style="left:10px;top:513px;width:1491px;height:1px;background:#e1e1e1"></div>
<div style="left:10px;top:535px;width:1491px;height:1px;background:#e1e1e1"></div>
<div style="left:199px;top:200px;width:1px;height:354px;background:#e1e1e1"></div>
<div style="left:409px;top:200px;width:1px;height:354px;background:#e1e1e1"></div>
<div style="left:641px;top:200px;width:1px;height:354px;background:#e1e1e1"></div>
<div style="left:656px;top:200px;width:1px;height:354px;background:#e1e1e1"></div>
<div style="left:799px;top:200px;width:1px;height:354px;background:#e1e1e1"></div>
<div style="left:973px;top:200px;width:1px;height:354px;background:#e1e1e1"></div>
<div style="left:1125px;top:200px;width:1px;height:354px;background:#e1e1e1"></div>
<div style="left:1275px;top:200px;width:1px;height:354px;background:#e1e1e1"></div>
<div style="left:1426px;top:200px;width:1px;height:354px;background:#e1e1e1"></div>
<div style="left:0px;top:200px;width:9px;height:354px;background:#efefef"></div>
<div style="left:9px;top:177px;width:1px;height:22px;background:#d6d6d6"></div>
<div style="left:9px;top:199px;width:1px;height:355px;background:#a8a8a8"></div>
<div style="left:9px;top:177px;width:1px;height:1px;background:#111"></div>
<div style="left:0px;top:221px;width:9px;height:1px;background:#d9d9d9"></div>
<div style="left:0px;top:243px;width:9px;height:1px;background:#d9d9d9"></div>
<div style="left:0px;top:265px;width:9px;height:1px;background:#d9d9d9"></div>
<div style="left:0px;top:287px;width:9px;height:1px;background:#d9d9d9"></div>
<div style="left:0px;top:309px;width:9px;height:1px;background:#d9d9d9"></div>
<div style="left:0px;top:331px;width:9px;height:1px;background:#d9d9d9"></div>
<div style="left:0px;top:353px;width:9px;height:1px;background:#d9d9d9"></div>
<div style="left:0px;top:375px;width:9px;height:1px;background:#d9d9d9"></div>
<div style="left:0px;top:399px;width:9px;height:1px;background:#d9d9d9"></div>
<div style="left:0px;top:423px;width:9px;height:1px;background:#d9d9d9"></div>
<div style="left:0px;top:447px;width:9px;height:1px;background:#d9d9d9"></div>
<div style="left:0px;top:469px;width:9px;height:1px;background:#d9d9d9"></div>
<div style="left:0px;top:491px;width:9px;height:1px;background:#d9d9d9"></div>
<div style="left:0px;top:513px;width:9px;height:1px;background:#d9d9d9"></div>
<div style="left:0px;top:535px;width:9px;height:1px;background:#d9d9d9"></div>
<div class="t" style="left:-15px;top:403.0px;width:16px;text-align:right;font-size:14px;line-height:16px;color:#2a3550">10</div>
<div class="t" style="left:-15px;top:427.0px;width:16px;text-align:right;font-size:14px;line-height:16px;color:#2a3550">11</div>
<div class="t" style="left:-15px;top:450.0px;width:16px;text-align:right;font-size:14px;line-height:16px;color:#2a3550">12</div>
<div class="t" style="left:-15px;top:472.0px;width:16px;text-align:right;font-size:14px;line-height:16px;color:#2a3550">13</div>
<div class="t" style="left:-15px;top:494.0px;width:16px;text-align:right;font-size:14px;line-height:16px;color:#2a3550">14</div>
<div class="t" style="left:-15px;top:516.0px;width:16px;text-align:right;font-size:14px;line-height:16px;color:#2a3550">15</div>
<div class="t" style="left:-15px;top:538.0px;width:16px;text-align:right;font-size:14px;line-height:16px;color:#2a3550">16</div>
<div style="left:10px;top:354px;width:631px;height:21px;background:#fff"></div>
<div style="left:10px;top:376px;width:631px;height:23px;background:#e2efda"></div>
<div style="left:10px;top:400px;width:631px;height:23px;background:#fff"></div>
<div style="left:10px;top:424px;width:631px;height:23px;background:#e2efda"></div>
<div style="left:10px;top:448px;width:631px;height:21px;background:#fff"></div>
<div style="left:10px;top:353px;width:631px;height:1px;background:#70ad47"></div>
<div style="left:10px;top:375px;width:631px;height:1px;background:#70ad47"></div>
<div style="left:10px;top:399px;width:631px;height:1px;background:#c6e0b4"></div>
<div style="left:10px;top:423px;width:631px;height:1px;background:#c6e0b4"></div>
<div style="left:10px;top:447px;width:631px;height:1px;background:#70ad47"></div>
<div style="left:10px;top:469px;width:631px;height:1px;background:#70ad47"></div>
<div class="t" style="left:12.43px;top:357.00px;font-size:15.84px;line-height:15.84px;color:#000;font-weight:bold;transform:scaleX(0.9088);">Rótulos de Linha</div>
<div class="t" style="left:202.87px;top:357.00px;font-size:15.84px;line-height:15.84px;color:#000;font-weight:bold;transform:scaleX(0.9149);">Soma de Estoque</div>
<div class="t" style="left:412.76px;top:357.00px;font-size:15.84px;line-height:15.84px;color:#000;font-weight:bold;transform:scaleX(0.9288);">Soma de Preço Unitário</div>
<div style="left:182px;top:357px;width:17px;height:17px;box-sizing:border-box;border:1px solid #a9abb8;background:linear-gradient(#fbfbfd,#e9eaf0)"></div>
<svg style="position:absolute;left:187px;top:364px" width="8" height="4" viewBox="0 0 8 4"><path d="M0 0 H7 L3.5 4 Z" fill="#5a5a5a"/></svg>
<svg style="position:absolute;left:17px;top:383px" width="12" height="12" viewBox="0 0 12 12"><rect x="0.5" y="0.5" width="10.5" height="10.5" rx="2" fill="#e9ebf1" stroke="#98acd2"/><path d="M2.5 5.75 H9 M5.75 2.5 V9" stroke="#2a3a6a" stroke-width="1.1"/></svg>
<div class="t" style="left:31.58px;top:381.00px;font-size:15.84px;line-height:15.84px;color:#000;font-weight:bold;transform:scaleX(1.0040);">Vestuário</div>
<div class="t" style="left:286.58px;top:381.00px;font-size:15.84px;line-height:15.84px;color:#000;font-weight:bold;transform:scaleX(1.0319);">1482</div>
<div class="t" style="left:419.04px;top:381.00px;font-size:15.84px;line-height:15.84px;color:#000;font-weight:bold;transform:scaleX(0.8961);">R$</div>
<div class="t" style="left:567.10px;top:381.00px;font-size:15.84px;line-height:15.84px;color:#000;font-weight:bold;transform:scaleX(1.0469);">5.298,70</div>
<svg style="position:absolute;left:17px;top:407px" width="12" height="12" viewBox="0 0 12 12"><rect x="0.5" y="0.5" width="10.5" height="10.5" rx="2" fill="#e9ebf1" stroke="#98acd2"/><path d="M2.5 5.75 H9 M5.75 2.5 V9" stroke="#2a3a6a" stroke-width="1.1"/></svg>
<div class="t" style="left:31.34px;top:405.00px;font-size:15.84px;line-height:15.84px;color:#000;font-weight:bold;transform:scaleX(0.9210);">Acessórios</div>
<div class="t" style="left:290.47px;top:405.00px;font-size:15.84px;line-height:15.84px;color:#000;font-weight:bold;transform:scaleX(1.0413);">159</div>
<div class="t" style="left:419.04px;top:405.00px;font-size:15.84px;line-height:15.84px;color:#000;font-weight:bold;transform:scaleX(0.8961);">R$</div>
<div class="t" style="left:580.72px;top:405.00px;font-size:15.84px;line-height:15.84px;color:#000;font-weight:bold;transform:scaleX(1.0518);">964,60</div>
<svg style="position:absolute;left:17px;top:431px" width="12" height="12" viewBox="0 0 12 12"><rect x="0.5" y="0.5" width="10.5" height="10.5" rx="2" fill="#e9ebf1" stroke="#98acd2"/><path d="M2.5 5.75 H9 M5.75 2.5 V9" stroke="#2a3a6a" stroke-width="1.1"/></svg>
<div class="t" style="left:31.08px;top:429.00px;font-size:15.84px;line-height:15.84px;color:#000;font-weight:bold;transform:scaleX(0.9718);">Calçado</div>
<div class="t" style="left:291.14px;top:429.00px;font-size:15.84px;line-height:15.84px;color:#000;font-weight:bold;transform:scaleX(1.0186);">350</div>
<div class="t" style="left:419.04px;top:429.00px;font-size:15.84px;line-height:15.84px;color:#000;font-weight:bold;transform:scaleX(0.8961);">R$</div>
<div class="t" style="left:566.55px;top:429.00px;font-size:15.84px;line-height:15.84px;color:#000;font-weight:bold;transform:scaleX(1.0559);">1.789,40</div>
<div class="t" style="left:13.25px;top:451.00px;font-size:15.84px;line-height:15.84px;color:#000;font-weight:bold;transform:scaleX(0.9437);">Total Geral</div>
<div class="t" style="left:286.58px;top:451.00px;font-size:15.84px;line-height:15.84px;color:#000;font-weight:bold;transform:scaleX(1.0271);">1991</div>
<div class="t" style="left:417.58px;top:451.00px;font-size:15.84px;line-height:15.84px;color:#000;font-weight:bold;transform:scaleX(0.9540);">R$</div>
<div class="t" style="left:568.77px;top:451.00px;font-size:15.84px;line-height:15.84px;color:#000;font-weight:bold;transform:scaleX(1.0311);">8.052,70</div>
<div style="left:656px;top:354px;width:317px;height:115px;background:#fff"></div>
<div style="left:656px;top:399px;width:317px;height:1px;background:#e2efda"></div>
<div style="left:656px;top:423px;width:317px;height:1px;background:#e2efda"></div>
<div style="left:655px;top:352px;width:319px;height:24px;box-sizing:border-box;border:2px solid #70ad47"></div>
<div style="left:655px;top:446px;width:319px;height:24px;box-sizing:border-box;border:2px solid #70ad47"></div>
<div style="left:655px;top:376px;width:1px;height:71px;background:#e1e1e1"></div>
<div style="left:973px;top:376px;width:1px;height:71px;background:#e1e1e1"></div>
<div style="left:799px;top:352px;width:1px;height:118px;background:#70ad47"></div>
<div class="t" style="left:658.53px;top:357.00px;font-size:15.84px;line-height:15.84px;color:#000;font-weight:bold;transform:scaleX(0.9080);">Rótulos de Linha</div>
<div style="left:782px;top:357px;width:17px;height:17px;box-sizing:border-box;border:1px solid #a9abb8;background:linear-gradient(#fbfbfd,#e9eaf0)"></div>
<svg style="position:absolute;left:787px;top:364px" width="8" height="4" viewBox="0 0 8 4"><path d="M0 0 H7 L3.5 4 Z" fill="#5a5a5a"/></svg>
<div class="t" style="left:802.91px;top:357.00px;font-size:15.84px;line-height:15.84px;color:#000;font-weight:bold;transform:scaleX(0.9318);">Contagem de Produtos</div>
<div class="t" style="left:659.46px;top:381.00px;font-size:15.84px;line-height:15.84px;color:#548235;transform:scaleX(0.9470);">Acessórios</div>
<div class="t" style="left:960.51px;top:381.00px;font-size:15.84px;line-height:15.84px;color:#548235;transform:scaleX(1.1191);">6</div>
<div class="t" style="left:658.76px;top:405.00px;font-size:15.84px;line-height:15.84px;color:#548235;transform:scaleX(0.9369);">Calçado</div>
<div class="t" style="left:960.56px;top:405.00px;font-size:15.84px;line-height:15.84px;color:#548235;transform:scaleX(1.1191);">9</div>
<div class="t" style="left:659.42px;top:429.00px;font-size:15.84px;line-height:15.84px;color:#548235;transform:scaleX(1.0182);">Vestuário</div>
<div class="t" style="left:952.13px;top:429.00px;font-size:15.84px;line-height:15.84px;color:#548235;transform:scaleX(1.0304);">45</div>
<div class="t" style="left:659.35px;top:451.00px;font-size:15.84px;line-height:15.84px;color:#000;font-weight:bold;transform:scaleX(0.9449);">Total Geral</div>
<div class="t" style="left:951.88px;top:451.00px;font-size:15.84px;line-height:15.84px;color:#000;font-weight:bold;transform:scaleX(1.0454);">60</div>
<div style="left:989px;top:207px;width:222px;height:304px;background:#fff"></div>
<div style="left:989px;top:207px;width:1px;height:304px;background:#5c5c5c"></div>
<div style="left:1210px;top:207px;width:1px;height:304px;background:#5c5c5c"></div>
<div style="left:989px;top:510px;width:222px;height:1px;background:#5c5c5c"></div>
<div style="left:989px;top:206px;width:222px;height:2px;background:#000"></div>
<div class="t" style="left:998.92px;top:215.00px;font-size:15.26px;line-height:15.26px;color:#000;font-weight:bold;transform:scaleX(0.9442);">Categoria</div>
<svg style="position:absolute;left:1140px;top:211px" width="24" height="22" viewBox="0 0 24 22"><path d="M2 4.5 L4.5 7 L9.5 2.5 M2 10.5 L4.5 13 L9.5 8.5 M2 16.5 L4.5 19 L9.5 14.5" fill="none" stroke="#333" stroke-width="1.3"/><path d="M12 6.5 H22 M12 12.5 H22 M12 18.5 H22" stroke="#444" stroke-width="1.4"/></svg>
<svg style="position:absolute;left:1175px;top:210px" width="26" height="25" viewBox="0 0 26 25"><path d="M2.5 2.5 H22.5 V5.5 L15 13 L10.5 13 V22.5 L10.5 13 L2.5 5.5 Z" fill="#efefef" stroke="#9a9a9a" stroke-width="1.3" stroke-linejoin="miter"/><path d="M10.5 13 V22.8" stroke="#9a9a9a" stroke-width="1.4"/><path d="M14.5 14.5 L22.5 22.5 M22.5 14.5 L14.5 22.5" stroke="#a8a8a8" stroke-width="1.2"/></svg>
<div style="left:999px;top:238px;width:202px;height:1px;background:#000"></div>
<div style="left:999px;top:243px;width:202px;height:29px;background:#999;border-radius:4px"></div>
<div class="t" style="left:1009.46px;top:250.00px;font-size:15.55px;line-height:15.55px;color:#111;transform:scaleX(0.9673);">Acessórios</div>
<div style="left:999px;top:275px;width:202px;height:29px;background:#999;border-radius:4px"></div>
<div class="t" style="left:1008.76px;top:282.00px;font-size:15.55px;line-height:15.55px;color:#111;transform:scaleX(0.9544);">Calçado</div>
<div style="left:999px;top:307px;width:202px;height:29px;background:#999;border-radius:4px"></div>
<div class="t" style="left:1009.42px;top:314.00px;font-size:15.55px;line-height:15.55px;color:#111;transform:scaleX(1.0263);">Vestuário</div>
<svg style="position:absolute;left:982px;top:200px" width="16" height="16" viewBox="0 0 16 16"><circle cx="7.5" cy="7.5" r="4.5" fill="#fff" stroke="#585858" stroke-width="1.6"/></svg>
<svg style="position:absolute;left:982px;top:503px" width="16" height="16" viewBox="0 0 16 16"><circle cx="7.5" cy="7.5" r="4.5" fill="#fff" stroke="#585858" stroke-width="1.6"/></svg>
<svg style="position:absolute;left:1093px;top:200px" width="16" height="16" viewBox="0 0 16 16"><circle cx="7.5" cy="7.5" r="4.5" fill="#fff" stroke="#585858" stroke-width="1.6"/></svg>
<svg style="position:absolute;left:1093px;top:503px" width="16" height="16" viewBox="0 0 16 16"><circle cx="7.5" cy="7.5" r="4.5" fill="#fff" stroke="#585858" stroke-width="1.6"/></svg>
<svg style="position:absolute;left:1203px;top:200px" width="16" height="16" viewBox="0 0 16 16"><circle cx="7.5" cy="7.5" r="4.5" fill="#fff" stroke="#585858" stroke-width="1.6"/></svg>
<svg style="position:absolute;left:1203px;top:503px" width="16" height="16" viewBox="0 0 16 16"><circle cx="7.5" cy="7.5" r="4.5" fill="#fff" stroke="#585858" stroke-width="1.6"/></svg>
<svg style="position:absolute;left:982px;top:351px" width="16" height="16" viewBox="0 0 16 16"><circle cx="7.5" cy="7.5" r="4.5" fill="#fff" stroke="#585858" stroke-width="1.6"/></svg>
<svg style="position:absolute;left:1203px;top:351px" width="16" height="16" viewBox="0 0 16 16"><circle cx="7.5" cy="7.5" r="4.5" fill="#fff" stroke="#585858" stroke-width="1.6"/></svg>
<svg style="position:absolute;left:0;top:0" width="1501" height="554" viewBox="0 0 1501 554">
<g fill="none" stroke="#e3191c" stroke-width="3.2" stroke-linecap="round" stroke-linejoin="round"><path d="M998.6 6.9 C1000.3 7.2 1005.2 8.1 1009.0 8.7 C1012.8 9.3 1018.6 9.5 1021.1 10.4 C1023.6 11.3 1023.4 11.9 1023.7 13.9 C1024.0 15.9 1023.5 19.9 1022.8 22.5 C1022.1 25.1 1021.3 27.3 1019.3 29.5 C1017.3 31.7 1014.6 33.9 1010.7 35.5 C1006.8 37.1 1002.1 38.0 996.0 39.0 C989.9 40.0 982.2 40.9 974.3 41.6 C966.3 42.3 956.2 43.0 948.3 43.3 C940.4 43.6 932.5 43.6 926.7 43.3 C920.9 43.0 916.3 43.0 913.7 41.6 C911.1 40.2 911.5 38.0 911.1 34.7 C910.7 31.4 910.6 25.2 911.5 21.7 C912.4 18.2 913.6 16.9 916.3 13.9 C919.0 10.9 923.6 5.4 927.5 3.5 C931.4 1.6 931.9 2.8 939.7 2.6 C947.5 2.5 962.8 2.7 974.3 2.6 C985.8 2.5 1000.8 2.3 1009.0 2.2 C1017.2 2.1 1021.2 2.2 1023.7 2.2"/><path d="M1147.0 28.6 C1155.0 28.2 1182.6 26.6 1195.0 26.0 C1207.4 25.4 1214.7 24.2 1221.3 25.0 C1227.9 25.8 1230.5 28.0 1234.5 30.8 C1238.5 33.6 1242.9 37.8 1245.3 41.6 C1247.7 45.4 1248.9 50.0 1248.9 53.6 C1248.9 57.2 1247.3 61.2 1245.3 63.2 C1243.3 65.2 1245.3 65.1 1236.9 65.6 C1228.5 66.1 1208.0 65.6 1195.0 66.2 C1182.0 66.8 1171.0 68.6 1159.0 69.2 C1147.0 69.8 1134.0 70.2 1123.0 69.8 C1112.0 69.4 1099.8 68.5 1093.0 66.8 C1086.2 65.1 1084.2 61.8 1082.2 59.6 C1080.2 57.4 1080.2 56.2 1081.0 53.6 C1081.8 51.0 1083.0 47.2 1087.0 44.0 C1091.0 40.8 1095.0 37.0 1105.0 34.4 C1115.0 31.8 1132.2 29.6 1147.0 28.4 C1161.8 27.2 1185.9 27.6 1193.7 27.4"/><path d="M1139.9 186.9 C1141.2 188.1 1145.1 190.7 1147.9 193.8 C1150.7 196.9 1154.3 201.7 1156.8 205.7 C1159.3 209.7 1161.5 215.4 1162.7 217.6 C1163.9 219.8 1162.9 220.8 1163.7 219.1 C1164.5 217.4 1166.4 211.6 1167.7 207.7 C1169.0 203.8 1170.1 199.1 1171.7 195.8 C1173.3 192.5 1175.4 190.4 1177.6 187.9 C1179.8 185.4 1183.4 182.1 1184.6 180.9"/><path d="M1182.0 261.1 C1184.3 261.0 1192.0 259.9 1195.7 260.3 C1199.4 260.7 1202.4 261.7 1204.3 263.7 C1206.2 265.7 1206.9 269.1 1206.9 272.3 C1206.9 275.5 1206.2 280.3 1204.3 282.6 C1202.4 284.9 1199.1 284.8 1195.7 286.0 C1192.3 287.2 1183.7 289.7 1183.7 289.8 C1183.7 289.9 1192.3 287.2 1195.7 286.9 C1199.1 286.5 1201.6 286.4 1204.3 287.7 C1207.0 289.0 1210.1 291.5 1212.0 294.6 C1213.9 297.8 1215.2 302.3 1215.5 306.6 C1215.8 310.9 1214.9 316.9 1213.7 320.3 C1212.5 323.7 1211.6 325.3 1208.6 327.2 C1205.6 329.1 1200.4 330.4 1195.7 331.5 C1191.0 332.6 1182.9 333.6 1180.3 334.0"/><path d="M1154.8 69.8 C1155.1 74.7 1155.3 86.5 1156.4 99.0 C1157.5 111.5 1160.3 132.7 1161.6 144.5 C1162.9 156.3 1164.0 163.3 1164.2 170.0 C1164.4 176.7 1163.8 179.5 1162.7 184.9 C1161.6 190.3 1158.6 199.7 1157.8 202.7" stroke-width="2.7"/>
<path d="M1016 1 H1024" stroke-width="3"/></g></svg>
</body></html>
